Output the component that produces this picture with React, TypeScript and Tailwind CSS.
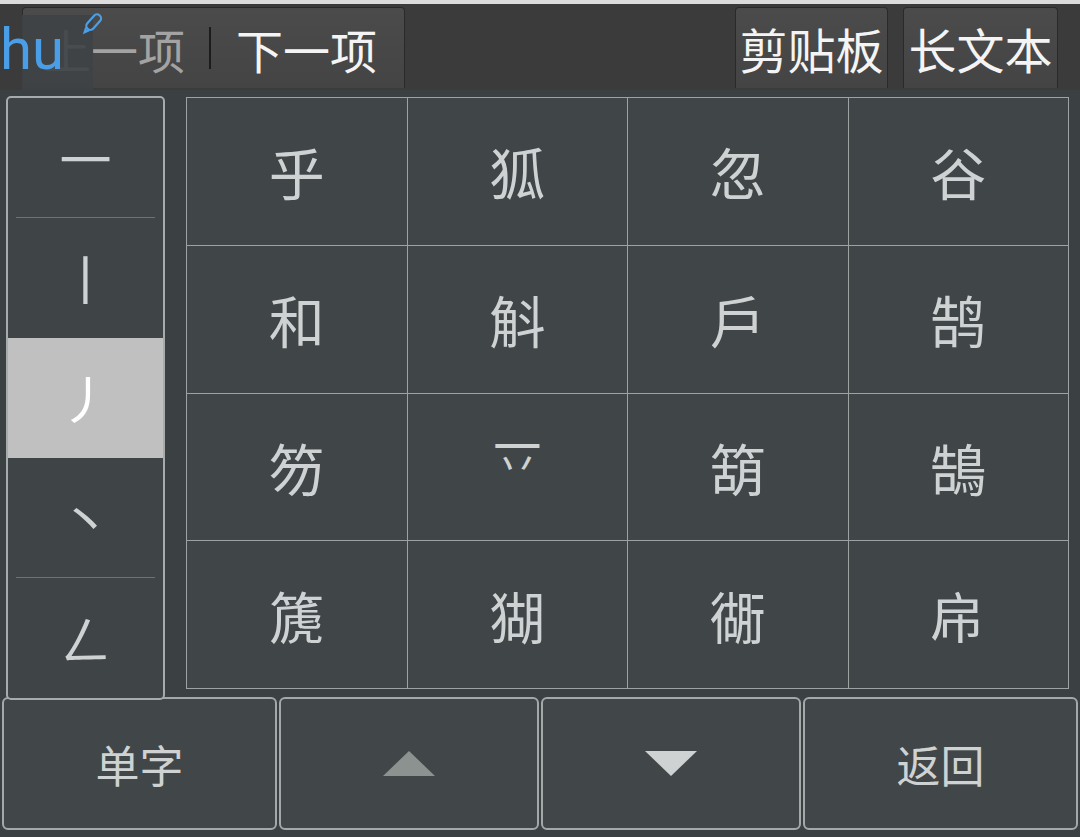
import React from 'react';

const cjk = { fontFamily: '"Noto Sans CJK SC", "Noto Sans", sans-serif' };

const strokes = ['一', '丨', '丿', '丶', 'ㄥ'];

const cells = [
  '乎', '狐', '忽', '谷',
  '和', '斛', '戶', '鹄',
  '笏', '', '箶', '鵠',
  '篪', '猢', '衚', '帍',
];

function Pencil() {
  return (
    <svg width="24" height="26" viewBox="0 0 24 26" className="absolute left-[80px] top-[7px]">
      <g transform="rotate(42 12 13)" fill="none" stroke="#4b9fe6" strokeWidth="2.2">
        <rect x="8" y="1.5" width="8" height="18" rx="4" />
        <path d="M10 19.5 L12 24 L14 19.5" />
      </g>
    </svg>
  );
}

function TopBar() {
  const btn =
    'flex h-[81px] items-center rounded-t-[4px] border border-b-0 border-[#2a2a2a] bg-gradient-to-b from-[#4b4b4b] to-[#444444]';
  return (
    <div className="relative flex h-[86px] items-end bg-[#3b3b3b] pb-[2px] pl-[22px] pr-[22px]">
      <div className={`${btn} w-[383px] pl-[21px]`}>
        <span className="text-[47px] leading-none text-[#a3a3a3]">上一项</span>
        <span className="ml-[24px] mr-[25px] h-[42px] w-[2px] bg-[#1c1c1c]" />
        <span className="text-[47px] leading-none text-[#f4f4f4]">下一项</span>
      </div>
      <div className="flex-1" />
      <div className={`${btn} w-[153px] justify-center`}>
        <span className="text-[48px] leading-none text-[#f4f4f4]">剪贴板</span>
      </div>
      <div className="w-[15px]" />
      <div className={`${btn} w-[155px] justify-center`}>
        <span className="text-[48px] leading-none text-[#f4f4f4]">长文本</span>
      </div>
      <div className="absolute left-[22px] top-[11px] h-[75px] w-[71px] bg-[#3e4345]/90" />
      <span
        className="absolute left-[0px] top-[16px] text-[58px] leading-none text-[#4a9ee8]"
        style={{ fontFamily: 'Roboto, "Liberation Sans", sans-serif' }}
      >
        hu
      </span>
      <Pencil />
    </div>
  );
}

function StrokeColumn() {
  return (
    <div className="relative z-10 flex h-[604px] w-[159px] flex-col overflow-hidden rounded-[5px] border-2 border-[#a6abab] bg-[#3f4446]">
      {strokes.map((s, i) => (
        <div key={s} className="flex flex-1 flex-col">
          <div
            className={
              i === 2
                ? 'flex flex-1 items-center justify-center bg-[#c0c0c0] text-[52px] leading-none text-white'
                : 'flex flex-1 items-center justify-center text-[52px] leading-none text-[#cfd2d2]'
            }
          >
            {s}
          </div>
          {(i === 0 || i === 3) && <div className="mx-[8px] h-px bg-[#6d7274]" />}
        </div>
      ))}
    </div>
  );
}

// 一 over 丷, a component glyph with no single code point in the font
function StackGlyph() {
  return (
    <div className="relative mb-[36px] h-[60px] w-[60px]">
      <span className="absolute left-[6px] top-0 text-[48px] leading-none">一</span>
      <span className="absolute left-[9px] top-[22px] text-[42px] leading-none">丷</span>
    </div>
  );
}

function Grid() {
  return (
    <div className="grid h-[592px] w-[883px] grid-cols-4 grid-rows-4 gap-px border border-[#9da2a2] bg-[#9da2a2]">
      {cells.map((c, i) => (
        <div key={i} className="flex items-center justify-center bg-[#404547] text-[56px] leading-none text-[#cfd2d2]">
          {c === '' ? <StackGlyph /> : c}
        </div>
      ))}
    </div>
  );
}

function Triangle({ up, color }: { up: boolean; color: string }) {
  return (
    <svg width="52" height="25" viewBox="0 0 52 25">
      <polygon points={up ? '26,0 52,25 0,25' : '0,0 52,0 26,25'} fill={color} />
    </svg>
  );
}

function BottomBar() {
  const btn = 'flex h-[133px] items-center justify-center rounded-[6px] border-2 border-[#a3a8a8] bg-[#414648]';
  return (
    <div className="flex gap-[2px] px-[2px]">
      <div className={`${btn} w-[275px] text-[44px] leading-none text-[#cfd2d2]`}>单字</div>
      <div className={`${btn} w-[260px]`}>
        <Triangle up color="#8c928f" />
      </div>
      <div className={`${btn} w-[260px]`}>
        <Triangle up={false} color="#cfd2d2" />
      </div>
      <div className={`${btn} w-[275px] text-[44px] leading-none text-[#cfd2d2]`}>返回</div>
    </div>
  );
}

export default function App() {
  return (
    <div className="flex h-[837px] w-[1080px] flex-col overflow-hidden bg-[#3b4042]" style={cjk}>
      <div className="h-[4px] bg-[#dcdcdc]" />
      <TopBar />
      <div className="-mb-[3px] flex gap-[21px] pl-[6px] pt-[6px]">
        <StrokeColumn />
        <div className="pt-px">
          <Grid />
        </div>
      </div>
      <BottomBar />
    </div>
  );
}
